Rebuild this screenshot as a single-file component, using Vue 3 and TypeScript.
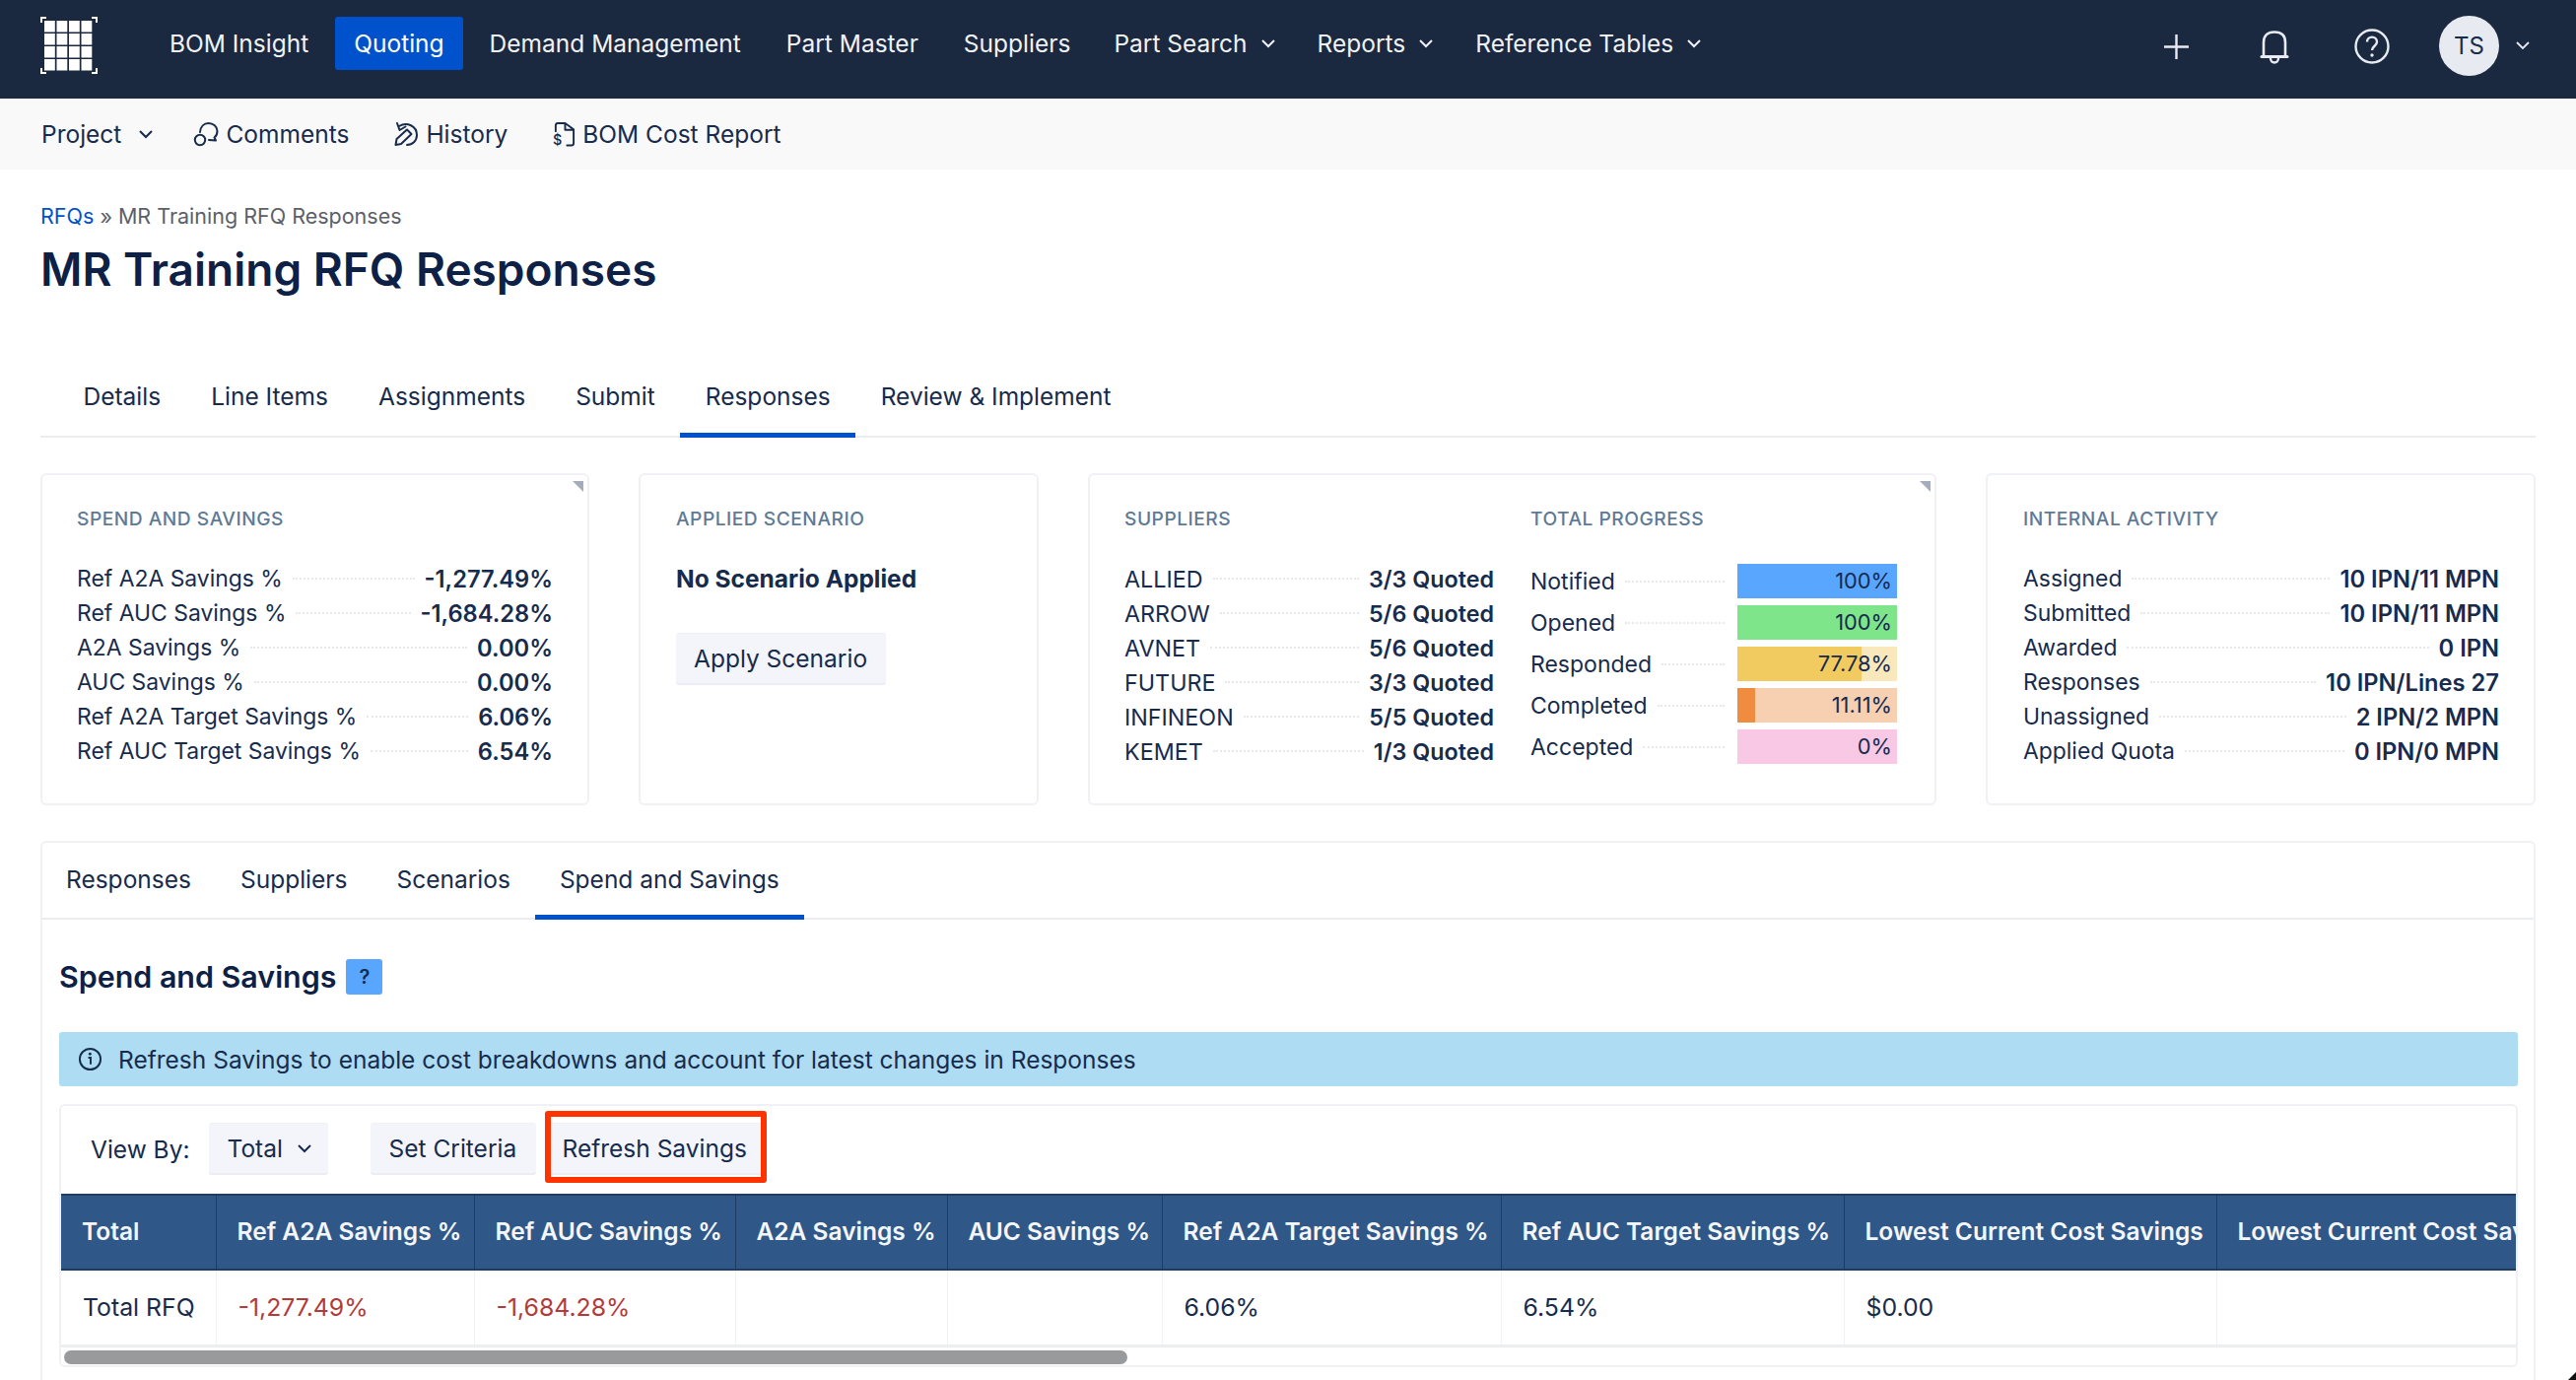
<script setup lang="ts">
const navItems = [
  { label: 'BOM Insight' },
  { label: 'Quoting', active: true },
  { label: 'Demand Management' },
  { label: 'Part Master' },
  { label: 'Suppliers', tight: true },
  { label: 'Part Search', caret: true },
  { label: 'Reports', caret: true },
  { label: 'Reference Tables', caret: true }
]
const mainTabs = ['Details', 'Line Items', 'Assignments', 'Submit', 'Responses', 'Review & Implement']
const subTabs = ['Responses', 'Suppliers', 'Scenarios', 'Spend and Savings']
const spend = [
  ['Ref A2A Savings %', '-1,277.49%'],
  ['Ref AUC Savings %', '-1,684.28%'],
  ['A2A Savings %', '0.00%'],
  ['AUC Savings %', '0.00%'],
  ['Ref A2A Target Savings %', '6.06%'],
  ['Ref AUC Target Savings %', '6.54%']
]
const suppliers = [
  ['ALLIED', '3/3 Quoted'],
  ['ARROW', '5/6 Quoted'],
  ['AVNET', '5/6 Quoted'],
  ['FUTURE', '3/3 Quoted'],
  ['INFINEON', '5/5 Quoted'],
  ['KEMET', '1/3 Quoted']
]
const progress = [
  { label: 'Notified', text: '100%', pct: 100, fg: '#58a6ff', bg: '#58a6ff' },
  { label: 'Opened', text: '100%', pct: 100, fg: '#7fe58a', bg: '#7fe58a' },
  { label: 'Responded', text: '77.78%', pct: 77.78, fg: '#f2cb60', bg: '#f9e8bb' },
  { label: 'Completed', text: '11.11%', pct: 11.11, fg: '#f08c40', bg: '#f7cfb1' },
  { label: 'Accepted', text: '0%', pct: 0, fg: '#f9c8e4', bg: '#f9c8e4' }
]
const activity = [
  ['Assigned', '10 IPN/11 MPN'],
  ['Submitted', '10 IPN/11 MPN'],
  ['Awarded', '0 IPN'],
  ['Responses', '10 IPN/Lines 27'],
  ['Unassigned', '2 IPN/2 MPN'],
  ['Applied Quota', '0 IPN/0 MPN']
]
const columns = [
  { head: 'Total', cell: 'Total RFQ', width: 157 },
  { head: 'Ref A2A Savings %', cell: '-1,277.49%', red: true, width: 262 },
  { head: 'Ref AUC Savings %', cell: '-1,684.28%', red: true, width: 265 },
  { head: 'A2A Savings %', cell: '', width: 215 },
  { head: 'AUC Savings %', cell: '', width: 218 },
  { head: 'Ref A2A Target Savings %', cell: '6.06%', width: 344 },
  { head: 'Ref AUC Target Savings %', cell: '6.54%', width: 348 },
  { head: 'Lowest Current Cost Savings', cell: '$0.00', width: 378 },
  { head: 'Lowest Current Cost Savings %', cell: '', width: 420 }
]
const cells = Array.from({ length: 16 }, (_, i) => i)
</script>

<template>
  <div class="page">
    <header class="topbar">
      <svg class="logo" viewBox="0 0 58 58">
        <path d="M1 6V1h5M52 1h5v5M57 52v5h-5M6 57H1v-5" fill="none" stroke="#fff" stroke-width="2" />
        <rect v-for="i in cells" :key="i" :x="4 + (i % 4) * 12.5" :y="4 + Math.floor(i / 4) * 13" width="10.800" height="11.500" fill="#fff" />
      </svg>
      <nav class="nav">
        <a v-for="n in navItems" :key="n.label" class="nav-item" :class="{ active: n.active, drop: n.caret, tight: n.tight }">
          {{ n.label }}
          <svg v-if="n.caret" class="caret" viewBox="0 0 16 10"><path d="M2 2l6 6 6-6" fill="none" stroke="currentColor" stroke-width="2" /></svg>
        </a>
      </nav>
      <div class="top-actions">
        <svg class="ic plus" viewBox="0 0 25 25"><path d="M12.500 0v25M0 12.500h25" stroke="#e8ebf1" stroke-width="2.400" fill="none" /></svg>
        <svg class="ic bell" viewBox="0 0 30 34"><path d="M4 26V12C4 5 8 1.500 15 1.500S26 5 26 12v14" stroke="#e8ebf1" stroke-width="2.600" fill="none" /><path d="M2 26.500h26" stroke="#e8ebf1" stroke-width="3" stroke-linecap="round" /><path d="M11 28c0 6 8 6 8 0" stroke="#e8ebf1" stroke-width="2.400" fill="none" /></svg>
        <svg class="ic help" viewBox="0 0 36 36"><circle cx="18" cy="18" r="16.500" stroke="#e8ebf1" stroke-width="2.400" fill="none" /><path d="M13 13.500c0-6.500 10-6.500 10 0 0 4-5 4.500-5 8.500" stroke="#e8ebf1" stroke-width="2.400" fill="none" /><circle cx="18" cy="27" r="1.700" fill="#e8ebf1" /></svg>
        <div class="avatar">TS</div>
        <svg class="caret user-caret" viewBox="0 0 16 10"><path d="M2 2l6 6 6-6" fill="none" stroke="#e8ebf1" stroke-width="1.800" /></svg>
      </div>
    </header>

    <div class="subbar">
      <a class="sub-item project">Project
        <svg class="caret" viewBox="0 0 16 10"><path d="M2 2l6 6 6-6" fill="none" stroke="currentColor" stroke-width="2" /></svg>
      </a>
      <a class="sub-item comments">
        <svg class="sub-ic" viewBox="0 0 26 26"><circle cx="7" cy="19" r="5.200" fill="none" stroke="currentColor" stroke-width="2" /><path d="M7 11C7.500 5.500 11 2 15.500 2 20.500 2 24.500 5.500 24.500 10 24.500 13 23.500 15 21.500 16.500L23 19.500 16 19" fill="none" stroke="currentColor" stroke-width="2" stroke-linecap="round" stroke-linejoin="round" /></svg>
        Comments
      </a>
      <a class="sub-item">
        <svg class="sub-ic" viewBox="0 0 26 26"><path d="M4 2l2.500 7 6-3.500M6 5c8-5 18 0 18 9 0 6-4.500 10-10 10" fill="none" stroke="currentColor" stroke-width="2" stroke-linecap="round" stroke-linejoin="round" /><path d="M2.500 24l1-6L14 8.500l4.500 4.500L8 23z" fill="none" stroke="currentColor" stroke-width="2" stroke-linejoin="round" /></svg>
        History
      </a>
      <a class="sub-item">
        <svg class="sub-ic doc" viewBox="0 0 24 26"><path d="M3 10V4c0-1.500 1-2.500 2.500-2.500h7.500L22 8v15c0 1.500-1 2-2.500 2H15M13 2v6.500h8" fill="none" stroke="currentColor" stroke-width="2" stroke-linecap="round" stroke-linejoin="round" /><text x="0" y="25" class="doc-dollar">$</text></svg>
        BOM Cost Report
      </a>
    </div>

    <main class="content">
      <div class="crumbs"><a class="crumb-link">RFQs</a> » MR Training RFQ Responses</div>
      <h1 class="title">MR Training RFQ Responses</h1>

      <div class="tabs main-tabs">
        <a v-for="t in mainTabs" :key="t" class="tab" :class="{ on: t === 'Responses' }">{{ t }}</a>
      </div>

      <section class="cards">
        <article class="card one">
          <span class="corner"></span>
          <h3 class="card-h">Spend and Savings</h3>
          <div class="rows">
            <div v-for="r in spend" :key="r[0]" class="row"><span>{{ r[0] }}</span><i class="dots"></i><b>{{ r[1] }}</b></div>
          </div>
        </article>

        <article class="card two">
          <h3 class="card-h">Applied Scenario</h3>
          <div class="no-scenario">No Scenario Applied</div>
          <button class="btn apply">Apply Scenario</button>
        </article>

        <article class="card three">
          <span class="corner"></span>
          <div class="col sup">
            <h3 class="card-h">Suppliers</h3>
            <div class="rows">
              <div v-for="r in suppliers" :key="r[0]" class="row"><span>{{ r[0] }}</span><i class="dots"></i><b>{{ r[1] }}</b></div>
            </div>
          </div>
          <div class="col prog">
            <h3 class="card-h">Total Progress</h3>
            <div class="bars">
              <div v-for="p in progress" :key="p.label" class="bar-row">
                <span>{{ p.label }}</span><i class="dots"></i>
                <div class="bar" :style="{ background: p.bg }">
                  <div class="fill" :style="{ width: p.pct + '%', background: p.fg }"></div>
                  <em>{{ p.text }}</em>
                </div>
              </div>
            </div>
          </div>
        </article>

        <article class="card four">
          <h3 class="card-h">Internal Activity</h3>
          <div class="rows">
            <div v-for="r in activity" :key="r[0]" class="row"><span>{{ r[0] }}</span><i class="dots"></i><b>{{ r[1] }}</b></div>
          </div>
        </article>
      </section>

      <section class="panel">
        <div class="tabs sub-tabs">
          <a v-for="t in subTabs" :key="t" class="tab" :class="{ on: t === 'Spend and Savings' }">{{ t }}</a>
        </div>
        <div class="panel-body">
          <div class="panel-head">
            <h2>Spend and Savings</h2>
            <span class="qm">?</span>
          </div>
          <div class="alert">
            <svg class="info" viewBox="0 0 26 26"><circle cx="13" cy="13" r="11" fill="none" stroke="currentColor" stroke-width="2" /><path d="M11 11.500h2.500v7" fill="none" stroke="currentColor" stroke-width="2" /><circle cx="12.800" cy="7.500" r="1.500" fill="currentColor" /></svg>
            Refresh Savings to enable cost breakdowns and account for latest changes in Responses
          </div>
          <div class="grid-card">
            <div class="toolbar">
              <span class="viewby">View By:</span>
              <button class="btn select">Total
                <svg class="caret" viewBox="0 0 16 10"><path d="M2 2l6 6 6-6" fill="none" stroke="currentColor" stroke-width="2" /></svg>
              </button>
              <button class="btn crit">Set Criteria</button>
              <button class="btn refresh">Refresh Savings</button>
            </div>
            <div class="table-wrap">
              <table class="table">
                <colgroup><col v-for="c in columns" :key="c.head" :style="{ width: c.width + 'px' }" /></colgroup>
                <thead><tr><th v-for="c in columns" :key="c.head">{{ c.head }}</th></tr></thead>
                <tbody><tr><td v-for="c in columns" :key="c.head" :class="{ red: c.red }">{{ c.cell }}</td></tr></tbody>
              </table>
            </div>
            <div class="scroll-track"><div class="scroll-thumb"></div></div>
          </div>
        </div>
      </section>
    </main>
    <span class="resize-mark"></span>
  </div>
</template>

<style>
html, body { margin: 0; padding: 0; background: #fff; overflow: hidden; }
</style>

<style scoped>
.page {
  position: relative;
  width: 2614px;
  height: 1400px;
  overflow: hidden;
  font-family: Inter, "Liberation Sans", sans-serif;
  font-size: 24.500px;
  color: #172b4d;
  background: #fff;
}
.resize-mark {
  position: absolute;
  right: 0;
  bottom: 0;
  width: 8px;
  height: 8px;
  background: #111;
  clip-path: polygon(100% 0, 100% 100%, 0 100%);
}
.topbar {
  height: 100px;
  box-sizing: border-box;
  background: #1a2840;
  display: flex;
  align-items: center;
  padding: 0 41px;
  color: #fff;
}
.logo { width: 58px; height: 58px; margin-top: -8px; flex: none; }
.nav { display: flex; align-items: center; margin-left: 54px; margin-top: -12px; }
.nav-item {
  display: flex;
  align-items: center;
  gap: 13px;
  height: 54px;
  padding: 0 19px;
  margin-right: 8px;
  border-radius: 3px;
  white-space: nowrap;
  color: #f0f2f6;
}
.nav-item.tight { margin-right: 6px; }
.nav-item.drop { margin-right: 4px; }
.nav-item.active { background: #0052cc; color: #fff; }
.caret { width: 16px; height: 10px; flex: none; }
.top-actions { margin-left: auto; display: flex; align-items: center; margin-top: -8px; }
.ic { flex: none; }
.plus { width: 25px; height: 25px; margin-right: 72px; margin-top: 2px; }
.bell { width: 30px; height: 34px; margin-right: 66px; margin-top: 4px; }
.help { width: 36px; height: 36px; margin-right: 50px; margin-top: 2px; }
.avatar {
  width: 61px;
  height: 61px;
  border-radius: 50%;
  background: #e7ebf1;
  color: #172b4d;
  display: flex;
  align-items: center;
  justify-content: center;
  font-size: 24px;
}
.user-caret { margin-left: 16px; margin-right: 5px; }

.subbar {
  height: 72px;
  background: #f9f9f9;
  display: flex;
  align-items: center;
  padding-left: 42px;
}
.sub-item { display: flex; align-items: center; gap: 7px; margin-right: 46px; white-space: nowrap; }
.sub-item.project { gap: 17px; margin-right: 40px; }
.sub-item.comments { margin-right: 45px; }
.sub-ic { width: 26px; height: 26px; flex: none; overflow: visible; }
.sub-ic.doc { width: 23px; }
.doc-dollar { font-size: 15px; fill: currentColor; font-weight: 500; font-family: Inter, sans-serif; }

.content { padding: 0 41px; }
.crumbs { margin-top: 33px; font-size: 21.500px; line-height: 28px; color: #5c6068; }
.crumb-link { color: #0052cc; }
.title { margin: 12px 0 0; font-size: 46px; line-height: 56px; font-weight: 600; color: #0d2147; }

.tabs { display: flex; border-bottom: 2px solid #ebecf0; box-sizing: border-box; }
.tab { padding: 0 25.500px; display: flex; align-items: center; border-bottom: 5px solid transparent; margin-bottom: -2px; white-space: nowrap; }
.tab.on { border-bottom-color: #0052cc; }
.main-tabs { margin-top: 65px; height: 78px; padding-left: 18px; }
.main-tabs .tab { padding-bottom: 2px; }

.cards {
  margin-top: 36px;
  display: grid;
  grid-template-columns: 557px 406px 861px 558px;
  column-gap: 50px;
  height: 337px;
}
.card {
  position: relative;
  box-sizing: border-box;
  border: 2px solid #f0f1f4;
  border-radius: 6px;
  padding: 32px 35px 0 35px;
}
.card.two, .card.four { padding-left: 36px; }
.card.three { display: flex; padding-right: 0; }
.corner {
  position: absolute;
  top: 6px;
  right: 4px;
  width: 11px;
  height: 11px;
  background: #a5adba;
  clip-path: polygon(0 0, 100% 0, 100% 100%);
}
.card-h {
  margin: 0;
  font-size: 19.200px;
  line-height: 24px;
  font-weight: 500;
  text-transform: uppercase;
  letter-spacing: 0.5px;
  color: #5e7a97;
}
.rows { margin-top: 31.500px; }
.row { display: flex; align-items: center; height: 35px; white-space: nowrap; }
.row span { font-size: 22.900px; }
.row b { font-weight: 600; font-size: 23.700px; }
.col.sup .row span { font-size: 23.300px; }
.col.sup .row b { font-size: 23.300px; }
.dots { flex: 1; height: 0; margin: 0 10px; border-top: 2px dotted #e6e8ec; }

.no-scenario { margin-top: 32px; font-weight: 700; line-height: 35px; }
.btn {
  font: inherit;
  color: inherit;
  background: #f4f5fb;
  border: 0;
  border-bottom: 2px solid #ebecf4;
  border-top: 1px solid #f0f1f7;
  box-sizing: border-box;
  border-radius: 3px;
  padding: 0 18px;
  display: inline-flex;
  align-items: center;
}
.apply { margin-top: 37px; height: 53px; width: 213px; white-space: nowrap; }

.col.sup { width: 375px; flex: none; }
.col.prog { width: 372px; flex: none; margin-left: 37px; }
.bars { margin-top: 34px; }
.bar-row { display: flex; align-items: center; height: 35px; margin-bottom: 7px; }
.bar-row span { white-space: nowrap; font-size: 23px; }
.bar-row .dots { margin-right: 13px; }
.bar { position: relative; width: 162px; height: 35px; flex: none; }
.fill { height: 100%; }
.bar em {
  position: absolute;
  right: 5px;
  top: 0;
  line-height: 35px;
  font-style: normal;
  font-size: 21.800px;
  color: #172b4d;
}

.panel {
  margin-top: 36px;
  height: 560px;
  box-sizing: border-box;
  border: 2px solid #f0f1f4;
  border-bottom: 0;
  border-radius: 6px 6px 0 0;
}
.sub-tabs { height: 78px; padding-left: 0; }
.sub-tabs .tab { padding: 0 25px; }
.sub-tabs .tab:first-child { margin-left: -1px; }
.panel-body { padding: 0 16px 0 17px; }
.panel-head { margin-top: 40px; display: flex; align-items: center; height: 36px; }
.panel-head h2 { margin: 0; font-size: 30.400px; font-weight: 600; line-height: 36px; color: #0d2147; }
.qm {
  margin-left: 10px;
  width: 37px;
  height: 36px;
  background: #58a6ff;
  border-radius: 3px;
  display: flex;
  align-items: center;
  justify-content: center;
  font-size: 20px;
  font-weight: 600;
}
.alert {
  margin-top: 38px;
  height: 55px;
  background: #aedcf2;
  border-radius: 3px;
  display: flex;
  align-items: center;
  padding-left: 19px;
  white-space: nowrap;
}
.info { width: 25px; height: 25px; margin-right: 16px; flex: none; }
.grid-card {
  margin-top: 18px;
  height: 267px;
  box-sizing: border-box;
  border: 2px solid #f0f1f4;
  border-radius: 6px;
  display: flex;
  flex-direction: column;
  overflow: hidden;
}
.toolbar { display: flex; align-items: center; height: 89px; flex: none; padding: 0 0 2px 30px; box-sizing: border-box; }
.viewby { margin-right: 20px; white-space: nowrap; }
.select { height: 53px; width: 121px; gap: 14px; margin-right: 43px; }
.crit { height: 53px; width: 168px; margin-right: 9px; white-space: nowrap; }
.refresh {
  position: relative;
  height: 53px;
  width: 222px;
  padding: 0 17px;
  white-space: nowrap;
}
.refresh::after {
  content: "";
  position: absolute;
  left: 0;
  right: -3px;
  top: -13px;
  bottom: -10px;
  border: 6.500px solid #ff3300;
  border-radius: 3px;
}
.table-wrap { flex: none; overflow: hidden; }
.table { border-collapse: collapse; table-layout: fixed; width: 2607px; }
.table th {
  height: 76px;
  background: #2f5888;
  color: #f4f6fa;
  font-weight: 600;
  text-align: left;
  padding: 0 0 2px 21px;
  white-space: nowrap;
  overflow: hidden;
  border-top: 2px solid #1f3c62;
  border-bottom: 2px solid #1f3c62;
  border-left: 1px solid #1f3c62;
  box-sizing: border-box;
}
.table th:first-child { border-left: 0; }
.table td {
  height: 76px;
  padding: 0 0 2px 22px;
  font-size: 24.800px;
  border-left: 1px solid #f0f1f4;
  box-sizing: border-box;
  white-space: nowrap;
}
.table td:first-child { border-left: 0; }
.table td.red { color: #b23a3a; }
.scroll-track { flex: 1; border-top: 3px solid #eceef0; position: relative; }
.scroll-thumb {
  position: absolute;
  left: 3px;
  top: 3px;
  width: 1079px;
  height: 14px;
  border-radius: 7px;
  background: #999a9c;
}
</style>
